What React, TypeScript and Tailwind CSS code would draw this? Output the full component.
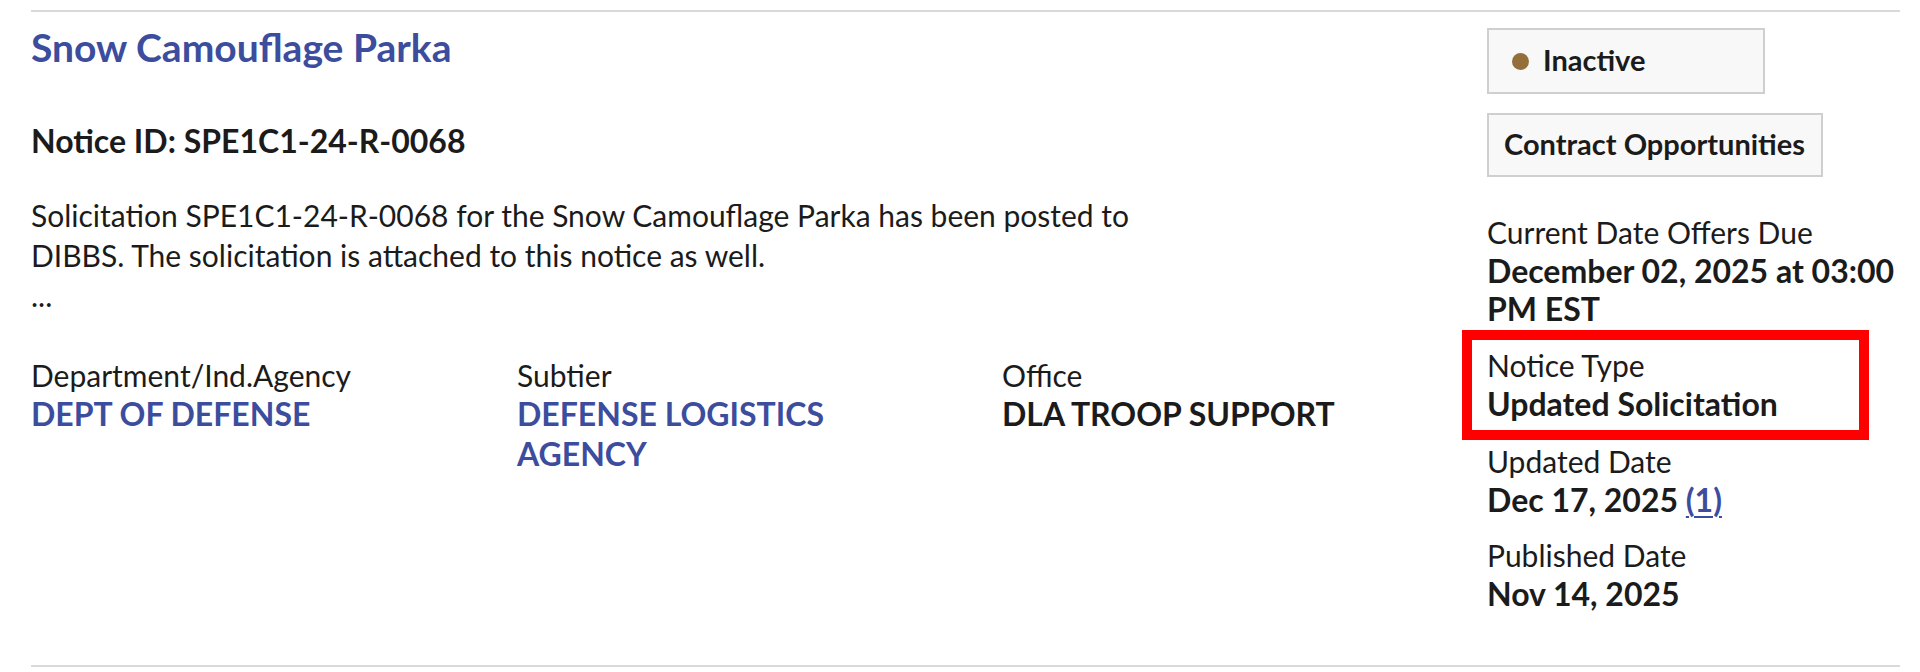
import React from "react";

const Label = ({ children }: { children: React.ReactNode }) => (
  <div className="text-[30px] leading-[40px] font-normal text-[#1b1b1b]">{children}</div>
);

const Value = ({ children, blue }: { children: React.ReactNode; blue?: boolean }) => (
  <div
    className={
      "text-[32px] leading-[38px] font-bold " + (blue ? "text-[#3c4d9e]" : "text-[#1b1b1b]")
    }
  >
    {children}
  </div>
);

export default function App() {
  return (
    <div
      className="w-[1920px] h-[672px] bg-white pt-[10px] pl-[31px] pr-[20px] overflow-hidden"
      style={{ fontFamily: "Lato, 'Liberation Sans', sans-serif" }}
    >
      <div className="flex border-t-2 border-b-2 border-[#d9d9d9]">
        {/* Left column */}
        <div className="flex-1 pt-[11px]">
          <a className="block text-[39px] leading-[48px] font-bold text-[#3c4d9e]" href="#">
            Snow Camouflage Parka
          </a>
          <h3 className="mt-[50px] text-[32px] leading-[40px] font-bold text-[#1b1b1b]">
            Notice ID: SPE1C1-24-R-0068
          </h3>
          <p className="mt-[34px] max-w-[1150px] text-[30px] leading-[40px] text-[#1b1b1b]">
            Solicitation SPE1C1-24-R-0068 for the Snow Camouflage Parka has been posted to DIBBS. The
            solicitation is attached to this notice as well.
            <br />
            ...
          </p>
          <div className="mt-[41px] grid grid-cols-[486px_485px_1fr]">
            <div className="w-[400px]">
              <div className="text-[30px] leading-[38px] text-[#1b1b1b]">Department/Ind.Agency</div>
              <div className="text-[32px] leading-[40px] font-bold text-[#3c4d9e]">DEPT OF DEFENSE</div>
            </div>
            <div className="w-[400px]">
              <div className="text-[30px] leading-[38px] text-[#1b1b1b]">Subtier</div>
              <div className="text-[32px] leading-[40px] font-bold text-[#3c4d9e]">
                DEFENSE LOGISTICS AGENCY
              </div>
            </div>
            <div className="w-[400px]">
              <div className="text-[30px] leading-[38px] text-[#1b1b1b]">Office</div>
              <div className="text-[32px] leading-[40px] font-bold text-[#1b1b1b]">DLA TROOP SUPPORT</div>
            </div>
          </div>
        </div>

        {/* Right column */}
        <div className="w-[413px] shrink-0 pt-[16px] pb-[52px]">
          <div className="flex flex-col items-start">
            <div className="flex items-center w-[278px] h-[66px] pl-[23px] pb-[3px] border-2 border-[#cfcfcf] bg-[#f8f8f8]">
              <span className="mt-[3px] w-[17px] h-[17px] rounded-full bg-[#946f3b]" />
              <span className="ml-[14px] text-[29px] leading-[38px] font-bold text-[#1b1b1b]">Inactive</span>
            </div>
            <div className="mt-[19px] flex items-center h-[64px] pl-[15px] pr-[16px] pb-[3px] border-2 border-[#cfcfcf] bg-[#f8f8f8]">
              <span className="text-[29px] leading-[38px] font-bold text-[#1b1b1b]">Contract Opportunities</span>
            </div>
          </div>

          <div className="mt-[35px]">
            <Label>Current Date Offers Due</Label>
            <Value>December 02, 2025 at 03:00 PM EST</Value>
          </div>

          <div className="relative mt-[17px]">
            <div className="absolute top-[-15px] bottom-[-17px] left-[-25px] right-[31px] border-[10px] border-[#ff0000] pointer-events-none" />
            <Label>Notice Type</Label>
            <Value>Updated Solicitation</Value>
          </div>

          <div className="mt-[18px]">
            <Label>Updated Date</Label>
            <Value>
              Dec 17, 2025{" "}
              <a href="#" className="text-[#3c4d9e] underline underline-offset-4 decoration-2">
                (1)
              </a>
            </Value>
          </div>

          <div className="mt-[16px]">
            <Label>Published Date</Label>
            <Value>Nov 14, 2025</Value>
          </div>
        </div>
      </div>
    </div>
  );
}
